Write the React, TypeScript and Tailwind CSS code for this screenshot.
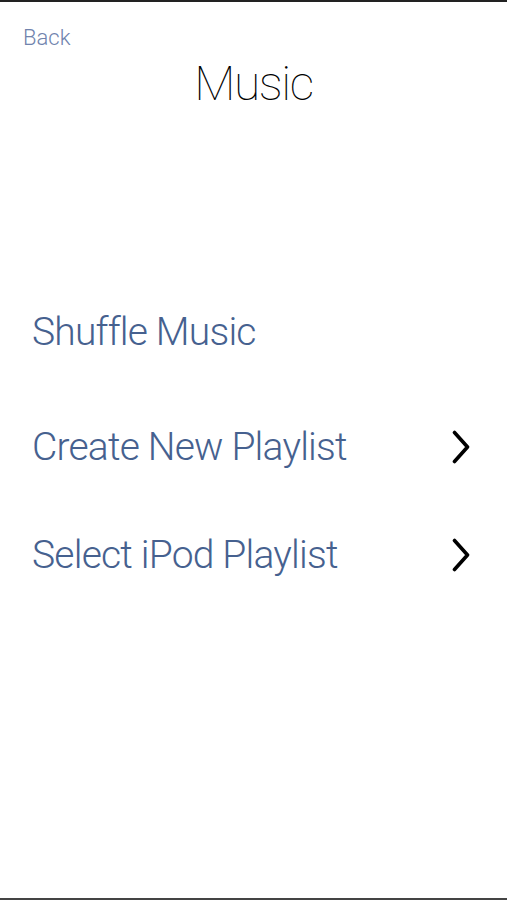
import React from 'react';

const Chevron: React.FC = () => (
  <svg width="20" height="34" viewBox="0 0 20 34" fill="none" className="shrink-0">
    <path d="M3.5 2.5 L16.5 17 L3.5 31.5" stroke="#000" strokeWidth="3.6" strokeLinecap="round" strokeLinejoin="round" />
  </svg>
);

const MenuRow: React.FC<{ label: string; arrow?: boolean; className?: string }> = ({ label, arrow, className }) => (
  <button className={`flex w-full items-center justify-between pl-[32px] pr-[36px] text-left ${className ?? ''}`}>
    <span className="text-[39px] leading-[48px] font-light tracking-[-0.8px] text-[#46618f]">{label}</span>
    {arrow && <Chevron />}
  </button>
);

export default function App() {
  return (
    <div
      className="flex h-[900px] w-full flex-col border-t-2 border-b-2 border-t-[#222] border-b-[#444] bg-white"
      style={{ fontFamily: 'Roboto, "Helvetica Neue", "Liberation Sans", sans-serif' }}
    >
      <div className="pl-[23px] pt-[24px]">
        <button className="text-[22px] leading-[24px] font-light text-[#7083ad]">Back</button>
      </div>
      <h1 className="mt-[4px] text-center text-[48px] leading-[56px] font-thin tracking-[-1.4px] text-black">Music</h1>

      <div className="mt-[196px] flex flex-col">
        <MenuRow label="Shuffle Music" />
        <MenuRow label="Create New Playlist" arrow className="mt-[67px]" />
        <MenuRow label="Select iPod Playlist" arrow className="mt-[60px]" />
      </div>
    </div>
  );
}
